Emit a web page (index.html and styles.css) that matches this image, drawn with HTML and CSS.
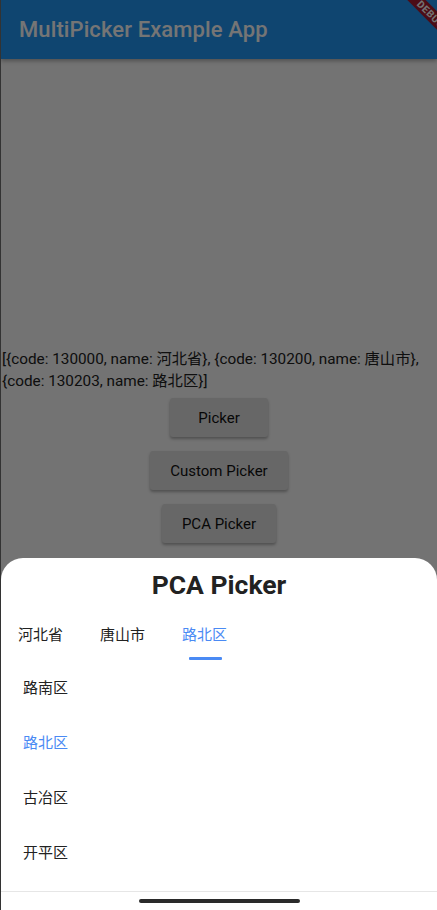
FILE: index.html
```html
<!DOCTYPE html>
<html lang="zh">
<head>
<meta charset="utf-8">
<link rel="stylesheet" href="styles.css">
</head>
<body>
<div class="screen">
  <header class="appbar">
    <h1 class="title">MultiPicker Example App</h1>
    <div class="banner"><span>DEBUG</span></div>
  </header>
  <main class="content">
    <p class="result">[{code: 130000, name: 河北省}, {code: 130200, name: 唐山市}, {code: 130203, name: 路北区}]</p>
    <div class="buttons">
      <button class="btn">Picker</button>
      <button class="btn">Custom Picker</button>
      <button class="btn">PCA Picker</button>
    </div>
  </main>
  <div class="scrim"></div>
  <section class="sheet">
    <h2 class="sheet-title">PCA Picker</h2>
    <nav class="tabs">
      <span class="tab">河北省</span>
      <span class="tab">唐山市</span>
      <span class="tab active">路北区</span>
    </nav>
    <ul class="list">
      <li class="item">路南区</li>
      <li class="item selected">路北区</li>
      <li class="item">古冶区</li>
      <li class="item">开平区</li>
    </ul>
    <div class="homebar"><span class="handle"></span></div>
  </section>
</div>
</body>
</html>
```

FILE: styles.css
```css
* { box-sizing: border-box; margin: 0; padding: 0; }
html, body { width: 437px; height: 910px; overflow: hidden; }
body {
  font-family: Roboto, "Noto Sans CJK SC", sans-serif;
  background: #fff;
}
.screen {
  position: relative;
  width: 437px;
  height: 910px;
  background: #fafafa;
  overflow: hidden;
  display: flex;
  flex-direction: column;
  border-left: 1px solid #333;
}
.appbar {
  position: relative;
  height: 59px;
  background: #2196f3;
  display: flex;
  align-items: center;
  padding-left: 18px;
  box-shadow: 0 2px 4px rgba(0,0,0,0.3);
  overflow: hidden;
  flex: none;
}
.title {
  font-size: 22px;
  font-weight: 500;
  color: #fff;
  letter-spacing: 0.1px;
  margin-top: -1px;
}
.banner {
  position: absolute;
  top: 8px;
  right: -44px;
  width: 100px;
  height: 13px;
  background: #a51c30;
  transform: rotate(45deg);
  display: flex;
  justify-content: center;
  align-items: center;
}
.banner span {
  font-size: 10px;
  font-weight: 700;
  color: #fff;
  letter-spacing: 0.5px;
}
.content {
  flex: 1;
  display: flex;
  flex-direction: column;
  justify-content: center;
  align-items: center;
  padding-bottom: 78px;
}
.result {
  align-self: stretch;
  font-size: 15.3px;
  line-height: 22px;
  color: #222;
  padding-left: 1px;
  padding-right: 4px;
}
.buttons {
  display: flex;
  flex-direction: column;
  align-items: center;
  gap: 14px;
  margin-top: 6px;
}
.btn {
  font-family: Roboto, sans-serif;
  font-size: 15px;
  font-weight: 400;
  color: #111;
  background: #e0e0e0;
  border: none;
  border-radius: 3px;
  height: 39px;
  padding: 0 16px;
  box-shadow: 0 2px 3px rgba(0,0,0,0.3);
}
.btn:nth-child(1) { width: 98px; }
.btn:nth-child(2) { width: 138px; }
.btn:nth-child(3) { width: 114px; }
.scrim {
  position: absolute;
  inset: 0;
  background: rgba(0,0,0,0.54);
}
.sheet {
  position: absolute;
  left: 0;
  right: 0;
  bottom: 0;
  top: 558px;
  background: #fff;
  border-radius: 22px 22px 0 0;
  display: flex;
  flex-direction: column;
}
.sheet-title {
  text-align: center;
  font-size: 26.5px;
  font-weight: 700;
  color: #222;
  padding-top: 12px;
  line-height: 30px;
}
.tabs {
  display: flex;
  padding-left: 17px;
  margin-top: 23px;
}
.tab {
  font-family: "Noto Sans CJK SC", sans-serif;
  font-size: 15px;
  color: #222;
  width: 82px;
  height: 38px;
  line-height: 22px;
  position: relative;
}
.tab.active { color: #4a8af4; }
.tab.active::after {
  content: "";
  position: absolute;
  left: 7px;
  top: 34px;
  width: 33px;
  height: 3px;
  background: #4a8af4;
  border-radius: 1px;
}
.list {
  list-style: none;
  flex: 1;
  padding-top: 6px;
}
.item {
  font-family: "Noto Sans CJK SC", sans-serif;
  font-size: 15px;
  color: #222;
  height: 55px;
  line-height: 40px;
  padding-left: 22px;
}
.item.selected { color: #4a8af4; }
.homebar {
  height: 19px;
  border-top: 1px solid #e6e6e6;
  display: flex;
  justify-content: center;
  padding-top: 7px;
  flex: none;
}
.handle {
  width: 161px;
  height: 4px;
  border-radius: 2px;
  background: #2a2a2a;
}
```
